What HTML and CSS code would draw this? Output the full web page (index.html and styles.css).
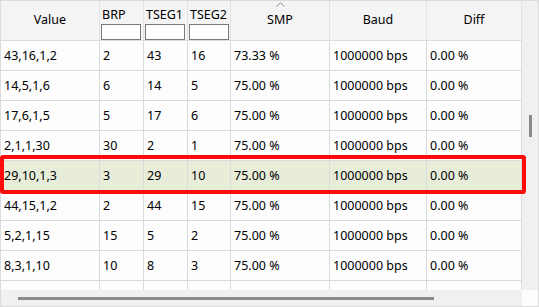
FILE: index.html
```html
<!DOCTYPE html>
<html>
<head>
<meta charset="utf-8">
<link rel="stylesheet" href="styles.css">
</head>
<body>
<div class="frame">
  <div class="viewport">
    <div class="grid head">
      <div class="hc center">Value</div>
      <div class="hc filter"><span>BRP</span><input class="box" type="text"></div>
      <div class="hc filter"><span>TSEG1</span><input class="box" type="text"></div>
      <div class="hc filter"><span>TSEG2</span><input class="box" type="text"></div>
      <div class="hc center sorted">
        <svg class="caret" width="9" height="5" viewBox="0 0 9 5"><polyline points="0.5,4.5 4.5,0.8 8.5,4.5" fill="none" stroke="#8a8a8a" stroke-width="1"/></svg>
        SMP</div>
      <div class="hc center">Baud</div>
      <div class="hc center">Diff</div>
    </div>
    <div class="grid row"><div>43,16,1,2</div><div>2</div><div>43</div><div>16</div><div>73.33 %</div><div>1000000 bps</div><div>0.00 %</div></div>
    <div class="grid row"><div>14,5,1,6</div><div>6</div><div>14</div><div>5</div><div>75.00 %</div><div>1000000 bps</div><div>0.00 %</div></div>
    <div class="grid row"><div>17,6,1,5</div><div>5</div><div>17</div><div>6</div><div>75.00 %</div><div>1000000 bps</div><div>0.00 %</div></div>
    <div class="grid row"><div>2,1,1,30</div><div>30</div><div>2</div><div>1</div><div>75.00 %</div><div>1000000 bps</div><div>0.00 %</div></div>
    <div class="grid row sel"><div>29,10,1,3</div><div>3</div><div>29</div><div>10</div><div>75.00 %</div><div>1000000 bps</div><div>0.00 %</div></div>
    <div class="grid row"><div>44,15,1,2</div><div>2</div><div>44</div><div>15</div><div>75.00 %</div><div>1000000 bps</div><div>0.00 %</div></div>
    <div class="grid row"><div>5,2,1,15</div><div>15</div><div>5</div><div>2</div><div>75.00 %</div><div>1000000 bps</div><div>0.00 %</div></div>
    <div class="grid row"><div>8,3,1,10</div><div>10</div><div>8</div><div>3</div><div>75.00 %</div><div>1000000 bps</div><div>0.00 %</div></div>
    <div class="grid row"><div></div><div></div><div></div><div></div><div></div><div></div><div></div></div>
  </div>
  <div class="vscroll"><div class="vthumb"></div></div>
  <div class="hscroll"><div class="hthumb"></div></div>
  <div class="corner"></div>
  <div class="mark"></div>
</div>
</body>
</html>
```
FILE: styles.css
```css
* { box-sizing: border-box; }
html, body { margin: 0; padding: 0; background: #ffffff; }
body {
  font-family: "Noto Sans", "Liberation Sans", sans-serif;
  font-size: 12.5px;
  color: #000;
}
.frame {
  position: relative;
  width: 539px;
  height: 307px;
  border: 1px solid #dcdcdc;
  display: grid;
  grid-template-columns: 521px 16px;
  grid-template-rows: 289px 16px;
  background: #fdfdfd;
}
.viewport {
  overflow: hidden;
  background: #fdfdfd;
}
.grid {
  display: grid;
  grid-template-columns: 99px 44px 44px 43px 99px 97px 95px;
}
.head {
  height: 40px;
  background: #f4f4f4;
  border-bottom: 1px solid #dcdcdc;
}
.hc {
  border-right: 1px solid #e2e2e2;
  position: relative;
}
.hc.center {
  display: flex;
  align-items: center;
  justify-content: center;
  padding-bottom: 3px;
}
.hc.filter {
  display: flex;
  flex-direction: column;
  padding: 5px 0 0 1px;
  line-height: 17px;
}
.hc.filter span { padding-left: 1px; }
.box {
  width: 40px;
  height: 16px;
  border: 1px solid #7a7a7a;
  background: #fff;
  margin: 1px 0 0 0;
  padding: 0;
  font-size: 11px;
}
.caret {
  position: absolute;
  top: 1px;
  left: 45px;
}
.row {
  height: 30px;
  border-bottom: 1px solid #dadada;
  line-height: 29px;
}
.row > div {
  border-right: 1px solid #dadada;
  padding-left: 3px;
  white-space: nowrap;
}
.row.sel { background: #e8edda; }
.vscroll {
  background: #f0f0f0;
  padding: 114px 0 0 7px;
}
.vthumb {
  width: 3px;
  height: 22px;
  background: #8a8a8a;
}
.hscroll {
  background: #f0f0f0;
  padding: 7px 0 0 17px;
}
.hthumb {
  width: 416px;
  height: 3px;
  background: #8a8a8a;
}
.corner { background: #fdfdfd; }
.mark {
  position: absolute;
  left: -1px;
  top: 154px;
  width: 526px;
  height: 39px;
  border: 4px solid #ff0a0a;
  border-radius: 3px;
  pointer-events: none;
}
```
